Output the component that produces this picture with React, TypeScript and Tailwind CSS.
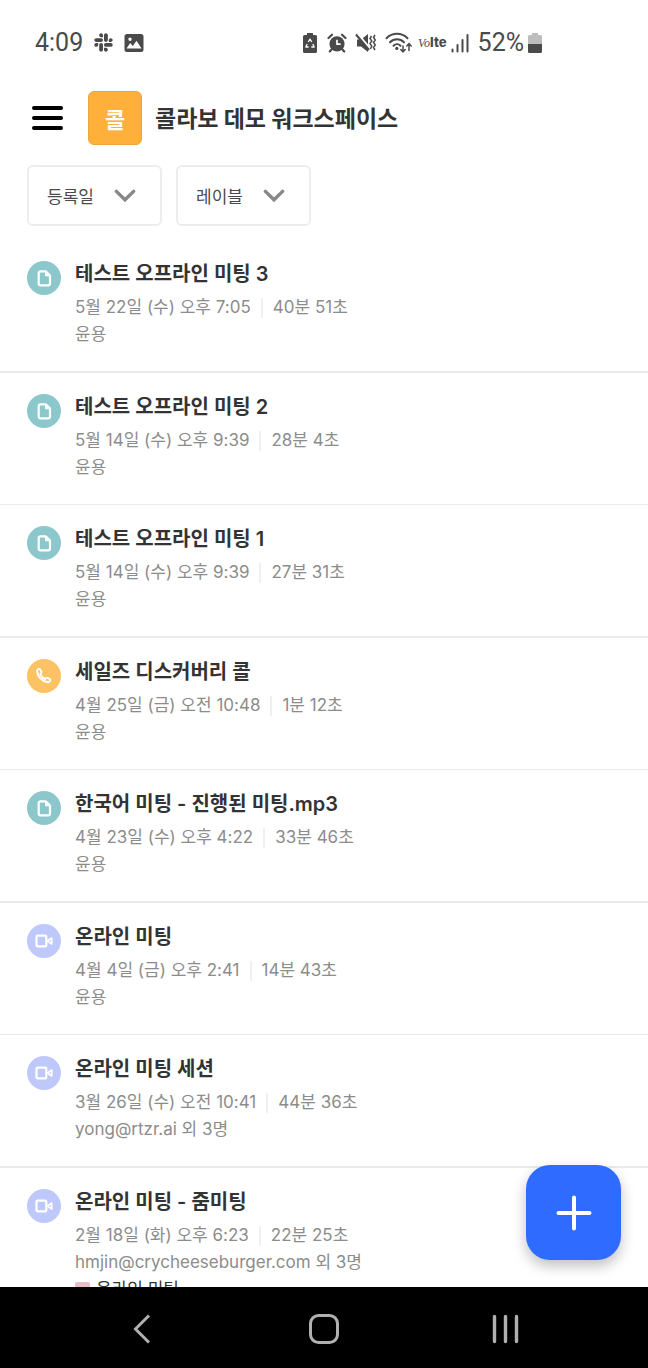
import { FaSlack } from 'react-icons/fa'

type Kind = 'file' | 'call' | 'video'

type Meeting = {
    kind: Kind
    title: string
    date: string
    duration: string
    people: string
    label?: string
}

const meetings: Meeting[] = [
    { kind: 'file', title: '테스트 오프라인 미팅 3', date: '5월 22일 (수) 오후 7:05', duration: '40분 51초', people: '윤용' },
    { kind: 'file', title: '테스트 오프라인 미팅 2', date: '5월 14일 (수) 오후 9:39', duration: '28분 4초', people: '윤용' },
    { kind: 'file', title: '테스트 오프라인 미팅 1', date: '5월 14일 (수) 오후 9:39', duration: '27분 31초', people: '윤용' },
    { kind: 'call', title: '세일즈 디스커버리 콜', date: '4월 25일 (금) 오전 10:48', duration: '1분 12초', people: '윤용' },
    { kind: 'file', title: '한국어 미팅 - 진행된 미팅.mp3', date: '4월 23일 (수) 오후 4:22', duration: '33분 46초', people: '윤용' },
    { kind: 'video', title: '온라인 미팅', date: '4월 4일 (금) 오후 2:41', duration: '14분 43초', people: '윤용' },
    { kind: 'video', title: '온라인 미팅 세션', date: '3월 26일 (수) 오전 10:41', duration: '44분 36초', people: 'yong@rtzr.ai 외 3명' },
    { kind: 'video', title: '온라인 미팅 - 줌미팅', date: '2월 18일 (화) 오후 6:23', duration: '22분 25초', people: 'hmjin@crycheeseburger.com 외 3명', label: '온라인 미팅' },
]

const kindColor: Record<Kind, string> = {
    file: 'bg-[#8cc7cc]',
    call: 'bg-[#fdc264]',
    video: 'bg-[#bfc8fb]',
}

const KindIcon = ({ kind }: { kind: Kind }) => (
    <span className={`flex h-[34px] w-[34px] shrink-0 items-center justify-center rounded-full text-white ${kindColor[kind]}`}>
        <svg className="h-5 w-5" viewBox="0 0 20 20" fill="none" stroke="currentColor" strokeWidth="2.2" strokeLinecap="round" strokeLinejoin="round">
            {kind === 'file' && (
                <>
                    <path d="M6.500 3.300h5.200l4.300 4.300v7.900a1.800 1.800 0 0 1-1.800 1.800H6.500a1.800 1.800 0 0 1-1.800-1.800V5.100a1.800 1.800 0 0 1 1.800-1.800z" />
                    <path d="M11.500 3.600v4.200h4.200z" fill="currentColor" strokeWidth="1" />
                </>
            )}
            {kind === 'call' && (
                <path strokeWidth="1.9" d="M3.100 5.100c0-.9.900-2 1.900-2.200.6-.1 1 .2 1.300.8l1.100 2.200c.2.500.1 1-.3 1.400l-.9.900c.9 2.100 2.700 3.900 4.800 4.900l1-1c.4-.3.9-.4 1.400-.2l2.200 1c.6.300.9.800.8 1.400-.3 1.100-1.400 2-2.500 1.900C8.100 15.700 3.600 11 3.100 5.100z" />
            )}
            {kind === 'video' && (
                <>
                    <rect x="2.500" y="4.600" width="9.800" height="10.800" rx="1.200" />
                    <path d="M13.500 9.900l4.200-2.800v5.800l-4.200-2.800z" strokeWidth="1.800" />
                </>
            )}
        </svg>
    </span>
)

const StatusBar = () => (
    <div className="flex h-[85px] items-center pl-[35px] pr-[106px] font-['Roboto',sans-serif] text-[25px] text-[#4a4a4a]">
        <span className="leading-none">4:09</span>
        <FaSlack className="ml-[10px] h-[21px] w-[21px]" />
        <svg className="ml-[10px] h-5 w-5" viewBox="0 0 20 20" fill="currentColor">
            <path fillRule="evenodd" d="M3 1h14a2.500 2.500 0 0 1 2.500 2.500v13A2.500 2.500 0 0 1 17 19H3a2.500 2.500 0 0 1-2.500-2.500v-13A2.500 2.500 0 0 1 3 1zM2.500 15.500l3.700-5.400 2.600 2.900 3.700-5.200 5 7.700zM6 4.600a1.700 1.700 0 1 0 0 3.400 1.700 1.700 0 0 0 0-3.400z" />
        </svg>

        <div className="ml-auto flex items-center">
            <svg className="h-[22px] w-4" viewBox="0 0 16 22">
                <path d="M5 1h6v2h2.500A1.500 1.500 0 0 1 15 4.500v15a1.500 1.500 0 0 1-1.500 1.500h-11A1.500 1.500 0 0 1 1 19.500v-15A1.500 1.500 0 0 1 2.500 3H5z" fill="currentColor" />
                <path d="M6.200 10L8 7.200 9.800 10M10.800 12l1.400 3H9.300M6.700 15H3.800l1.400-3" fill="none" stroke="#fff" strokeWidth="1.300" strokeLinejoin="round" />
            </svg>
            <svg className="ml-[9px] h-5 w-5" viewBox="0 0 20 20" fill="none" stroke="currentColor" strokeWidth="2.2" strokeLinecap="round">
                <circle cx="10" cy="10.800" r="7.600" fill="currentColor" stroke="none" />
                <path d="M1.500 5L5 1.700M18.500 5L15 1.700M4.500 16.500l-1.700 2M15.500 16.500l1.700 2" />
                <path d="M10 6.800v4.400h3.600" stroke="#fff" strokeWidth="1.700" strokeLinecap="butt" />
            </svg>
            <svg className="ml-2 h-[22px] w-[22px]" viewBox="0 0 22 22" fill="none" stroke="currentColor">
                <path d="M2 7.500h4l7-5.500v18l-7-5.500H2z" fill="currentColor" stroke="none" />
                <path d="M2.500 1.500L15 16.500" stroke="#fff" strokeWidth="2" />
                <path d="M1 2.500l13 15.500" strokeWidth="2" />
                <path d="M16.500 4L15 6.500 16.800 9 15 11.500l1.800 2.500-1.500 3M20 3l-1.500 2.500L20.300 8l-1.800 2.500 1.800 2.500-1.800 2.500 1.500 2.500" strokeWidth="1.500" />
            </svg>
            <svg className="ml-2 h-[22px] w-[27px]" viewBox="0 0 27 22" fill="none" stroke="currentColor" strokeWidth="2" strokeLinecap="round">
                <path d="M1.500 6.200C7.500.4 16.500.4 22.500 6.200M5 10.200c4-4 10-4 14 0M8.500 13.800c2-2 5-2 7 0" />
                <circle cx="11.800" cy="16.400" r="1.600" fill="currentColor" stroke="none" />
                <path d="M18 14v5M15.800 17.500l2.200 2.300 2.200-2.300M24 18.500v-5.500M21.800 14l2.200-2.300 2.200 2.300" strokeWidth="1.500" />
            </svg>
            <span className="ml-[6px] flex items-center text-[13px] leading-none">
                <span className="font-['Liberation_Serif',serif] text-[12px] italic">Vo</span>
                <span className="font-['Inter',sans-serif] font-extrabold">lte</span>
            </span>
            <svg className="ml-1 h-5 w-[18px]" viewBox="0 0 18 20" stroke="currentColor" strokeWidth="2" strokeLinecap="round">
                <path d="M1.500 16.500v2M6.500 12v6.500M11.500 7v11.500M16.500 2v16.500" />
            </svg>
            <span className="ml-[9px] leading-none">52%</span>
            <svg className="ml-1 h-[22px] w-[14px]" viewBox="0 0 14 22">
                <path d="M4 1h6v2h2.500A1.500 1.500 0 0 1 14 4.500V12H0V4.500A1.500 1.500 0 0 1 1.500 3H4z" fill="#bdbdbd" />
                <path d="M0 12h14v7.500a1.500 1.500 0 0 1-1.500 1.500h-11A1.500 1.500 0 0 1 0 19.500z" fill="currentColor" />
            </svg>
        </div>
    </div>
)

const Filter = ({ name }: { name: string }) => (
    <div className="relative">
        <select aria-label={name} className="h-[61px] w-[135px] appearance-none rounded-md border-2 border-[#ededed] bg-white pl-[18px] text-[17px] text-[#4a4a4a]">
            <option>{name}</option>
        </select>
        <svg className="pointer-events-none absolute right-[26px] top-6 h-[14px] w-[22px]" viewBox="0 0 22 14" fill="none" stroke="#888" strokeWidth="3.4" strokeLinecap="round">
            <path d="M2.400 2.400L11 10.800l8.600-8.400" />
        </svg>
    </div>
)

const MeetingRow = ({ meeting }: { meeting: Meeting }) => (
    <li className="flex gap-[14px] border-[#ebebeb] px-[27px] pb-[23px] pt-5 odd:border-b-2 even:border-b">
        <div className="pt-px">
            <KindIcon kind={meeting.kind} />
        </div>
        <div className="min-w-0 text-[17px] leading-[27px] text-[#8c8c8c]">
            <h2 className="mb-[6px] text-[20px] font-semibold leading-[28px] text-[#333]">{meeting.title}</h2>
            <p className="flex items-center">
                {meeting.date}
                <span className="mx-[10px] h-5 w-[2px] bg-[#f0f0f0]"></span>
                {meeting.duration}
            </p>
            <p>{meeting.people}</p>
            {meeting.label && (
                <p className="flex items-center text-[#333]">
                    <span className="mr-[6px] h-[15px] w-[15px] rounded-xs bg-[#e8bfc6]"></span>
                    {meeting.label}
                </p>
            )}
        </div>
    </li>
)

const App = () => {
    return (
        <div className="flex h-screen flex-col overflow-hidden bg-white font-['Inter','Noto_Sans_CJK_KR',sans-serif]">
            <StatusBar />

            <header className="flex items-center px-8 pt-[6px] font-['Noto_Sans_CJK_KR',sans-serif]">
                <button aria-label="메뉴" className="flex w-[31px] flex-col gap-[6px]">
                    <span className="h-1 w-full rounded-full bg-black"></span>
                    <span className="h-1 w-full rounded-full bg-black"></span>
                    <span className="h-1 w-full rounded-full bg-black"></span>
                </button>
                <span className="ml-[25px] flex h-[54px] w-[54px] items-center justify-center rounded-md border border-[#eda63c] bg-[#ffb03b] text-[22px] font-bold text-white">콜</span>
                <h1 className="ml-[13px] pb-[2px] text-[23px] font-bold text-[#333]">콜라보 데모 워크스페이스</h1>
            </header>

            <div className="flex gap-[14px] px-[27px] pb-[14px] pt-5 font-['Noto_Sans_CJK_KR',sans-serif]">
                <Filter name="등록일" />
                <Filter name="레이블" />
            </div>

            <main className="relative min-h-0 flex-1 overflow-hidden">
                <ul>
                    {meetings.map((meeting) => (
                        <MeetingRow key={meeting.title} meeting={meeting} />
                    ))}
                </ul>
                <button aria-label="추가" className="absolute bottom-[27px] right-[27px] flex h-[95px] w-[95px] items-center justify-center rounded-3xl bg-[#2f6bff] shadow-[0_6px_14px_rgba(0,0,0,0.25)]">
                    <svg className="h-9 w-9" viewBox="0 0 36 36" stroke="#fff" strokeWidth="4" strokeLinecap="round">
                        <path d="M18 2.500v31M2.500 18h31" />
                    </svg>
                </button>
            </main>

            <nav className="grid h-[81px] shrink-0 grid-cols-3 justify-items-center bg-black px-[51px] pt-[3px]">
                <button aria-label="뒤로">
                    <svg className="h-8 w-8" viewBox="0 0 32 32" fill="none" stroke="#b0b0b0" strokeWidth="3">
                        <path d="M23 2.500L9.500 16 23 29.500" />
                    </svg>
                </button>
                <button aria-label="홈">
                    <svg className="h-8 w-8" viewBox="0 0 32 32" fill="none" stroke="#b0b0b0" strokeWidth="3">
                        <rect x="2.500" y="2.500" width="27" height="27" rx="8" />
                    </svg>
                </button>
                <button aria-label="최근 앱">
                    <svg className="h-8 w-8" viewBox="0 0 32 32" fill="none" stroke="#b0b0b0" strokeWidth="3.4" strokeLinecap="round">
                        <path d="M4.500 3.500v25M15.500 3.500v25M26.500 3.500v25" />
                    </svg>
                </button>
            </nav>
        </div>
    )
}

export default App
